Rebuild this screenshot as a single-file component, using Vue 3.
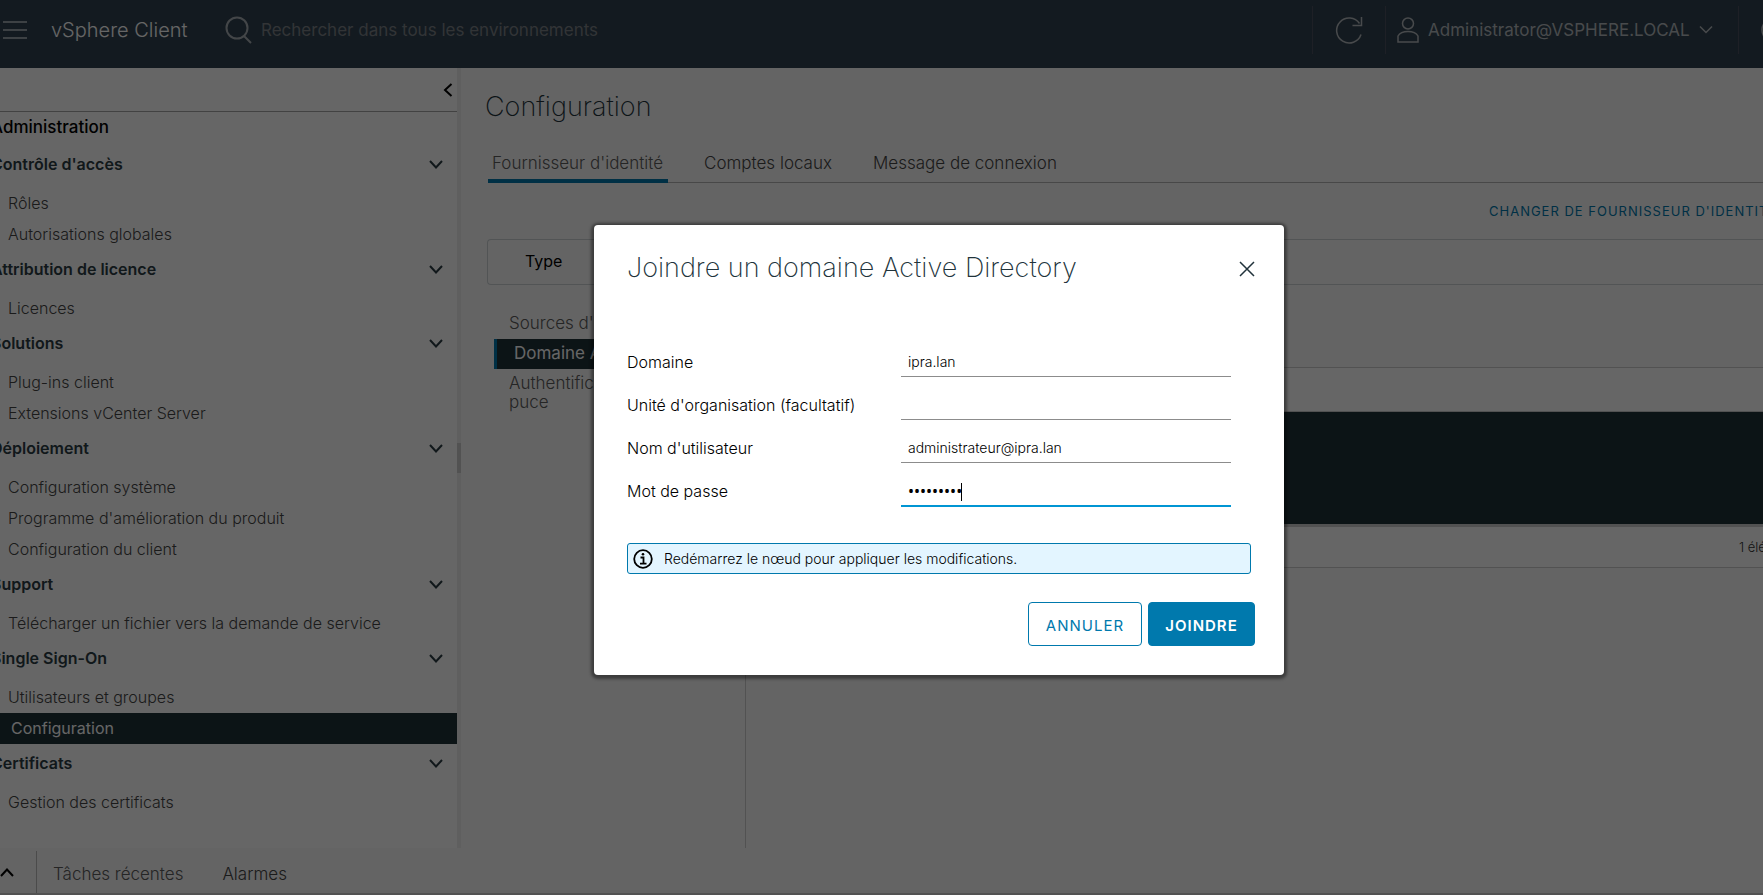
<script setup>
import { ref } from 'vue'

const groups = [
  { title: "Contrôle d'accès", items: ['Rôles', 'Autorisations globales'] },
  { title: 'Attribution de licence', items: ['Licences'] },
  { title: 'Solutions', items: ['Plug-ins client', 'Extensions vCenter Server'] },
  { title: 'Déploiement', items: ['Configuration système', "Programme d'amélioration du produit", 'Configuration du client'] },
  { title: 'Support', items: ['Télécharger un fichier vers la demande de service'] },
  { title: 'Single Sign-On', items: ['Utilisateurs et groupes', 'Configuration'] },
  { title: 'Certificats', items: ['Gestion des certificats'] }
]
const activeItem = 'Configuration'
const tabs = ["Fournisseur d'identité", 'Comptes locaux', 'Message de connexion']

const domain = ref('ipra.lan')
const unit = ref('')
const user = ref('administrateur@ipra.lan')
const password = ref('motdepass')
</script>

<template>
  <div class="app">
    <header class="header">
      <button class="icon-btn menu" aria-label="Menu">
        <svg width="24" height="18" viewBox="0 0 24 18"><path d="M0 1h24M0 9h24M0 17h24" /></svg>
      </button>
      <a class="brand" href="#">vSphere Client</a>
      <label class="search">
        <svg width="28" height="28" viewBox="0 0 28 28"><circle cx="12" cy="12" r="10.5" /><path d="M19 20l7 7" /></svg>
        <input type="search" aria-label="Rechercher" placeholder="Rechercher dans tous les environnements" />
      </label>
      <div class="header-cell refresh">
        <button class="icon-btn" aria-label="Actualiser">
          <svg width="28" height="28" viewBox="0 0 28 28"><path d="M26 18.500A12.500 12.500 0 1 1 24.500 7.500M26.500 1v8.500h-9" /></svg>
        </button>
      </div>
      <div class="header-cell account">
        <button class="icon-btn account-btn">
          <svg width="22" height="26" viewBox="0 0 22 26"><circle cx="11" cy="6.500" r="5.500" /><path d="M1 25v-6c2-3.500 6-4.500 10-4.500s8 1 10 4.500v6z" /></svg>
          <span>Administrator@VSPHERE.LOCAL</span>
          <svg width="14" height="10" viewBox="0 0 14 10"><path d="M1 1.500l6 6 6-6" /></svg>
        </button>
      </div>
      <div class="header-cell help">
        <button class="icon-btn" aria-label="Aide">
          <svg width="26" height="26" viewBox="0 0 26 26"><circle cx="13" cy="13" r="12" /></svg>
        </button>
      </div>
    </header>

    <div class="body">
      <aside class="sidebar">
        <div class="collapse">
          <button class="icon-btn" aria-label="Réduire">
            <svg width="10" height="14" viewBox="0 0 10 14"><path d="M8.500 1L2 7l6.500 6" /></svg>
          </button>
        </div>
        <nav class="tree">
          <h2>Administration</h2>
          <section v-for="g in groups" :key="g.title">
            <button class="group">
              <span>{{ g.title }}</span>
              <svg width="14" height="9" viewBox="0 0 14 9"><path d="M1 1l6 6.500L13 1" /></svg>
            </button>
            <a v-for="i in g.items" :key="i" href="#" class="item" :class="{ active: i === activeItem }">{{ i }}</a>
          </section>
        </nav>
      </aside>
      <div class="splitter"><span></span></div>

      <main class="main">
        <h1>Configuration</h1>
        <div class="tabs" role="tablist">
          <button v-for="(t, n) in tabs" :key="t" role="tab" class="tab" :class="{ selected: n === 0 }">{{ t }}</button>
        </div>
        <div class="change"><a href="#">CHANGER DE FOURNISSEUR D'IDENTITÉ</a></div>
        <div class="type-card">Type</div>
        <div class="panes">
          <nav class="vnav">
            <a href="#">Sources d'identité</a>
            <a href="#" class="current">Domaine Active Directory</a>
            <a href="#">Authentification par carte à puce</a>
          </nav>
          <div class="grid">
            <div class="grid-head"></div>
            <div class="grid-row"></div>
            <div class="grid-foot"><span>1 élément</span></div>
          </div>
        </div>
      </main>
    </div>

    <footer class="footer">
      <button class="icon-btn expand" aria-label="Développer">
        <svg width="14" height="9" viewBox="0 0 14 9"><path d="M1 8l6-6.500L13 8" /></svg>
      </button>
      <button class="foot-tab muted">Tâches récentes</button>
      <button class="foot-tab">Alarmes</button>
    </footer>

    <div class="backdrop">
      <form class="modal" role="dialog" aria-labelledby="dlg-title" @submit.prevent>
        <div class="modal-head">
          <h3 id="dlg-title">Joindre un domaine Active Directory</h3>
          <button type="button" class="icon-btn close" aria-label="Fermer">
            <svg width="16" height="16" viewBox="0 0 16 16"><path d="M1 1l14 14M15 1L1 15" /></svg>
          </button>
        </div>
        <div class="fields">
          <div class="field">
            <label for="f-domain">Domaine</label>
            <div class="control"><input id="f-domain" v-model="domain" type="text" /></div>
          </div>
          <div class="field">
            <label for="f-unit">Unité d'organisation (facultatif)</label>
            <div class="control"><input id="f-unit" v-model="unit" type="text" /></div>
          </div>
          <div class="field">
            <label for="f-user">Nom d'utilisateur</label>
            <div class="control"><input id="f-user" v-model="user" type="text" /></div>
          </div>
          <div class="field">
            <label for="f-pass">Mot de passe</label>
            <div class="control focused"><input id="f-pass" v-model="password" type="password" /><span class="caret"></span></div>
          </div>
        </div>
        <div class="alert" role="status">
          <svg width="20" height="20" viewBox="0 0 20 20"><circle cx="10" cy="10" r="8.800" /><path d="M7.500 8.500H10.500V14.500M7 14.700h6.500" /><circle class="dot" cx="10" cy="5.300" r="1.300" /></svg>
          <span>Redémarrez le nœud pour appliquer les modifications.</span>
        </div>
        <div class="actions">
          <button type="button" class="btn outline">ANNULER</button>
          <button type="submit" class="btn primary">JOINDRE</button>
        </div>
      </form>
    </div>
  </div>
</template>

<style>
html, body { margin: 0; height: 100%; overflow: hidden; }
</style>

<style scoped>
.app {
  position: relative;
  height: 100vh;
  display: flex;
  flex-direction: column;
  overflow: hidden;
  background: #fafafa;
  font-family: Inter, "Open Sans", sans-serif;
  font-size: 16px;
  font-weight: 300;
  color: #313131;
}
* { box-sizing: border-box; }
button, input { font: inherit; color: inherit; background: none; border: 0; padding: 0; margin: 0; outline: 0; }
a { color: inherit; text-decoration: none; }
h1, h2, h3 { margin: 0; }
svg { display: block; flex: none; fill: none; stroke: currentColor; stroke-width: 2; }
.icon-btn { display: flex; align-items: center; }

.header {
  flex: none;
  display: flex;
  align-items: center;
  height: 68px;
  padding: 0 0 8px 3px;
  background: #314351;
  color: #fff;
}
.menu { color: #9aa3aa; }
.brand { margin-left: 24px; font-size: 20px; font-weight: 300; width: 174px; white-space: nowrap; }
.search { display: flex; align-items: center; gap: 8px; flex: 1; color: #a9afb5; }
.search input { flex: 1; min-width: 0; font-size: 17px; font-weight: 400; }
.search input::placeholder { color: #7d8288; opacity: 1; }
.header-cell { display: flex; align-items: center; height: 48px; border-left: 1px solid #4b505f; color: #b4b9bd; }
.refresh { width: 73px; justify-content: center; }
.account { width: 353px; padding-left: 11px; }
.account-btn { gap: 9px; font-size: 17px; font-weight: 400; }
.help { width: 25px; padding-left: 22px; overflow: hidden; }
.header-cell svg { stroke-width: 1.5; }

.body { flex: 1; min-height: 0; display: flex; }
.sidebar { flex: none; width: 457px; background: #fff; overflow: hidden; }
.collapse { display: flex; align-items: center; justify-content: flex-end; height: 44px; padding-right: 4px; border-bottom: 1px solid #a5a5a5; color: #000; }
.tree { margin-left: -9px; }
.tree h2 { height: 33px; font-size: 17px; line-height: 30px; font-weight: 500; color: #000; }
.group { display: flex; align-items: center; justify-content: space-between; width: 100%; height: 43px; padding: 0 14px 5px 0; font-weight: 600; color: #2c3c44; }
.item { display: block; height: 31px; padding-left: 17px; line-height: 30px; color: #454545; }
.item.active { padding-left: 20px; background: #1e3239; color: #fff; font-weight: 400; }
.splitter { flex: none; display: flex; align-items: center; width: 4px; background: #eee; }
.splitter span { width: 4px; height: 30px; background: #ccc; }

.main { flex: 1; min-width: 0; display: flex; flex-direction: column; padding: 16px 0 0 26px; overflow: hidden; }
h1 { height: 46px; margin-left: -2px; font-size: 27px; line-height: 46px; font-weight: 200; color: #21333b; }
.tabs { display: flex; gap: 32px; height: 53px; margin-left: 1px; border-bottom: 1px solid #b3b3b3; }
.tab { height: 53px; padding: 16px 5px 0 4px; border-bottom: 4px solid transparent; font-size: 17px; white-space: nowrap; color: #454545; }
.tab.selected { border-bottom-color: #0079ad; color: #5c5c5c; }
.change { display: flex; justify-content: flex-end; height: 56px; }
.change a { width: 274px; line-height: 56px; font-size: 13px; font-weight: 400; letter-spacing: 1px; white-space: nowrap; color: #0079ad; }
.type-card { height: 46px; padding-left: 37px; border: 1px solid #ccd2d5; border-right: 0; border-radius: 4px 0 0 4px; line-height: 43px; font-weight: 400; color: #000; }
.panes { flex: 1; min-height: 0; display: flex; }
.vnav { flex: none; width: 259px; padding: 24px 6px 0 7px; border-right: 1px solid #ccc; font-size: 17px; }
.vnav a { display: block; padding: 5px 0 6px 15px; line-height: 19px; color: #5c5c5c; }
.vnav a.current { padding-left: 17px; border-left: 3px solid #0079ad; background: #1e3239; color: #fff; font-weight: 400; white-space: nowrap; overflow: hidden; }
.grid { flex: 1; min-width: 0; margin: 82px 0 0 24px; }
.grid-head { height: 45px; border: 1px solid #ccc; border-right: 0; background: #fff; }
.grid-row { height: 115px; background: #1e3239; border-bottom: 3px solid #ccc; }
.grid-foot { display: flex; justify-content: flex-end; height: 41px; border: 1px solid #ccc; border-width: 0 0 1px 1px; background: #fff; }
.grid-foot span { width: 24px; font-size: 13px; line-height: 40px; white-space: nowrap; }

.footer { flex: none; display: flex; align-items: center; height: 47px; padding-top: 3px; border-bottom: 2px solid #ccc; font-size: 17px; }
.expand { height: 100%; width: 37px; border-right: 1px solid #bbb; color: #000; }
.foot-tab { margin-left: 16px; padding: 4px 23px 0 0; color: #454545; }
.foot-tab.muted { color: #5c5c5c; }

.backdrop { position: absolute; inset: 0; display: flex; align-items: center; justify-content: center; padding: 5px 0 0 115px; background: rgba(0, 0, 0, 0.6); }
.modal { width: 690px; padding: 26px 29px 29px 33px; border-radius: 4px; background: #fff; box-shadow: 0 1px 3px 3px rgba(0, 0, 0, 0.4); color: #000; }
.modal-head { display: flex; align-items: center; justify-content: space-between; height: 34px; }
h3 { font-size: 27px; line-height: 32px; font-weight: 200; color: #21333b; }
.close { padding-top: 2px; color: #21333b; }
.close svg { stroke-width: 1.5; }
.fields { padding-top: 49px; }
.field { display: flex; align-items: flex-end; height: 43px; padding-right: 24px; }
.field label { flex: 1; height: 29px; line-height: 28px; font-size: 16px; }
.control { position: relative; width: 330px; height: 29px; border-bottom: 1px solid #8c8c8c; }
.control input { width: 100%; height: 27px; padding: 0 7px; font-size: 14px; }
.control.focused { height: 30px; margin-bottom: -1px; border-bottom: 2px solid #0095d3; }
.control.focused input { height: 28px; }
.control input[type="password"] { font-family: "Noto Sans", sans-serif; font-size: 16px; font-weight: 400; }
.caret { position: absolute; left: 60px; top: 6px; width: 1px; height: 18px; background: #000; }
.alert { display: flex; align-items: center; gap: 11px; height: 31px; margin: 37px 4px 0 0; padding-left: 5px; border: 1px solid #0079ad; border-radius: 3px; background: #e3f5ff; font-size: 14px; }
.alert svg { stroke-width: 1.8; }
.alert .dot { fill: currentColor; stroke: none; }
.actions { display: flex; justify-content: flex-end; gap: 6px; margin-top: 28px; }
.btn { height: 44px; padding: 2px 0 0; border: 1px solid #0079ad; border-radius: 4px; font-size: 15px; letter-spacing: 1px; }
.outline { width: 114px; font-weight: 400; color: #0079ad; }
.primary { width: 107px; font-weight: 600; background: #0079ad; color: #fff; }
</style>
